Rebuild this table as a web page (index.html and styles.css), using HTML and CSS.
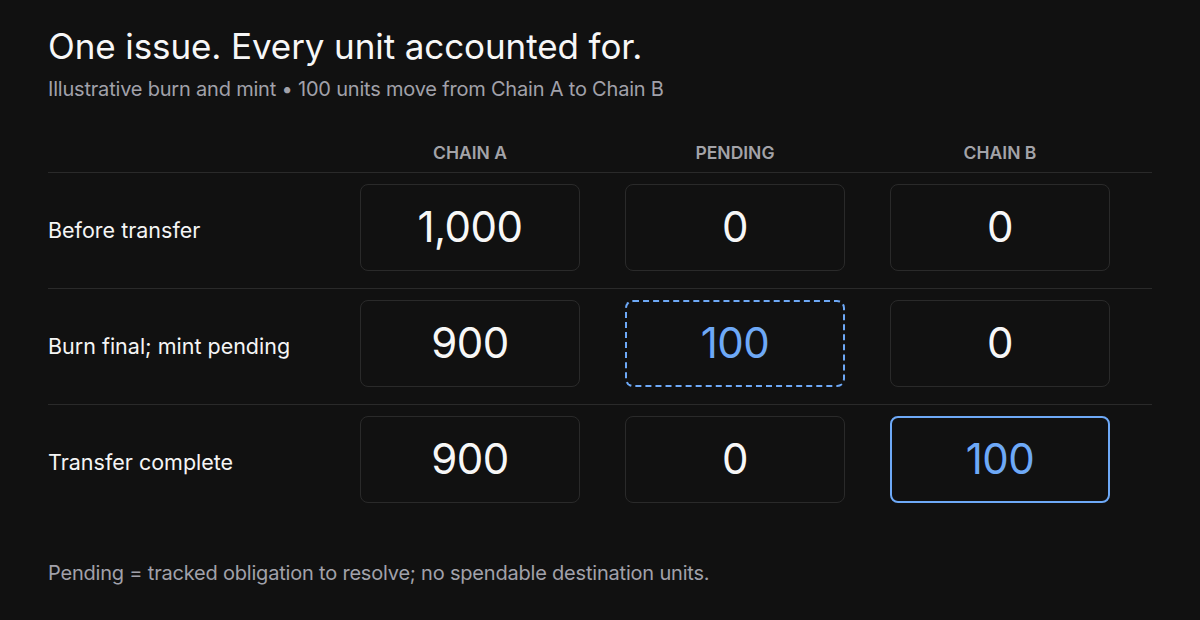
FILE: index.html
```html
<!DOCTYPE html>
<html lang="en">
<head>
    <meta charset="UTF-8">
    <meta name="viewport" content="width=device-width, initial-scale=1.0">
    <title>Burn and mint</title>
    <link rel="stylesheet" href="styles.css">
</head>
<body>
    <main class="panel">
        <h1 class="titulo">One issue. Every unit accounted for.</h1>
        <p class="sub">Illustrative burn and mint • 100 units move from Chain A to Chain B</p>

        <div class="tabela">
            <div class="linha cabeca">
                <span></span>
                <span class="col">CHAIN A</span>
                <span class="col">PENDING</span>
                <span class="col">CHAIN B</span>
            </div>
            <div class="linha">
                <span class="rotulo">Before transfer</span>
                <div class="caixa">1,000</div>
                <div class="caixa">0</div>
                <div class="caixa">0</div>
            </div>
            <div class="linha">
                <span class="rotulo">Burn final; mint pending</span>
                <div class="caixa">900</div>
                <div class="caixa azul tracejada">100</div>
                <div class="caixa">0</div>
            </div>
            <div class="linha ultima">
                <span class="rotulo">Transfer complete</span>
                <div class="caixa">900</div>
                <div class="caixa">0</div>
                <div class="caixa azul ativa">100</div>
            </div>
        </div>

        <p class="nota">Pending = tracked obligation to resolve; no spendable destination units.</p>
    </main>
</body>
</html>
```

FILE: styles.css
```css
*, *::before, *::after
{
    box-sizing: border-box;
    margin: 0;
    padding: 0;
}
html, body
{
    width: 1200px;
    height: 620px;
}
body
{
    background-color: #111111;
    color: #f5f5f5;
    font-family: Inter, "Noto Sans", sans-serif;
    overflow: hidden;
}
.panel
{
    padding: 24px 48px 0 48px;
}
.titulo
{
    font-size: 35px;
    font-weight: 400;
    line-height: 44px;
    letter-spacing: -0.1px;
    color: #f7f7f7;
}
.sub
{
    margin-top: 8px;
    font-size: 20px;
    line-height: 26px;
    color: #a1a1aa;
    letter-spacing: -0.2px;
}
.tabela
{
    margin-top: 40px;
}
.linha
{
    display: grid;
    grid-template-columns: 267px 220px 220px 220px;
    column-gap: 45px;
    align-items: center;
    padding: 11px 0 17px 0;
    border-bottom: 1px solid #2a2a2a;
}
.linha.ultima
{
    border-bottom: none;
}
.cabeca
{
    padding: 0 0 8px 0;
}
.col
{
    text-align: center;
    font-size: 17.5px;
    font-weight: 600;
    color: #a3a3a8;
    line-height: 22px;
}
.rotulo
{
    font-size: 21.5px;
    color: #f5f5f5;
    margin-top: 4px;
}
.caixa
{
    height: 87px;
    border: 1.5px solid #2a2a2a;
    border-radius: 8px;
    display: flex;
    align-items: center;
    justify-content: center;
    font-size: 42px;
    letter-spacing: -0.5px;
    color: #f7f7f7;
    padding-bottom: 2px;
}
.azul
{
    color: #6ea9f7;
}
.tracejada
{
    border: 2px dashed #6ea9f7;
}
.ativa
{
    border: 2px solid #6ea9f7;
}
.nota
{
    margin-top: 40px;
    font-size: 20px;
    line-height: 26px;
    color: #a1a1aa;
    letter-spacing: -0.2px;
}
```
